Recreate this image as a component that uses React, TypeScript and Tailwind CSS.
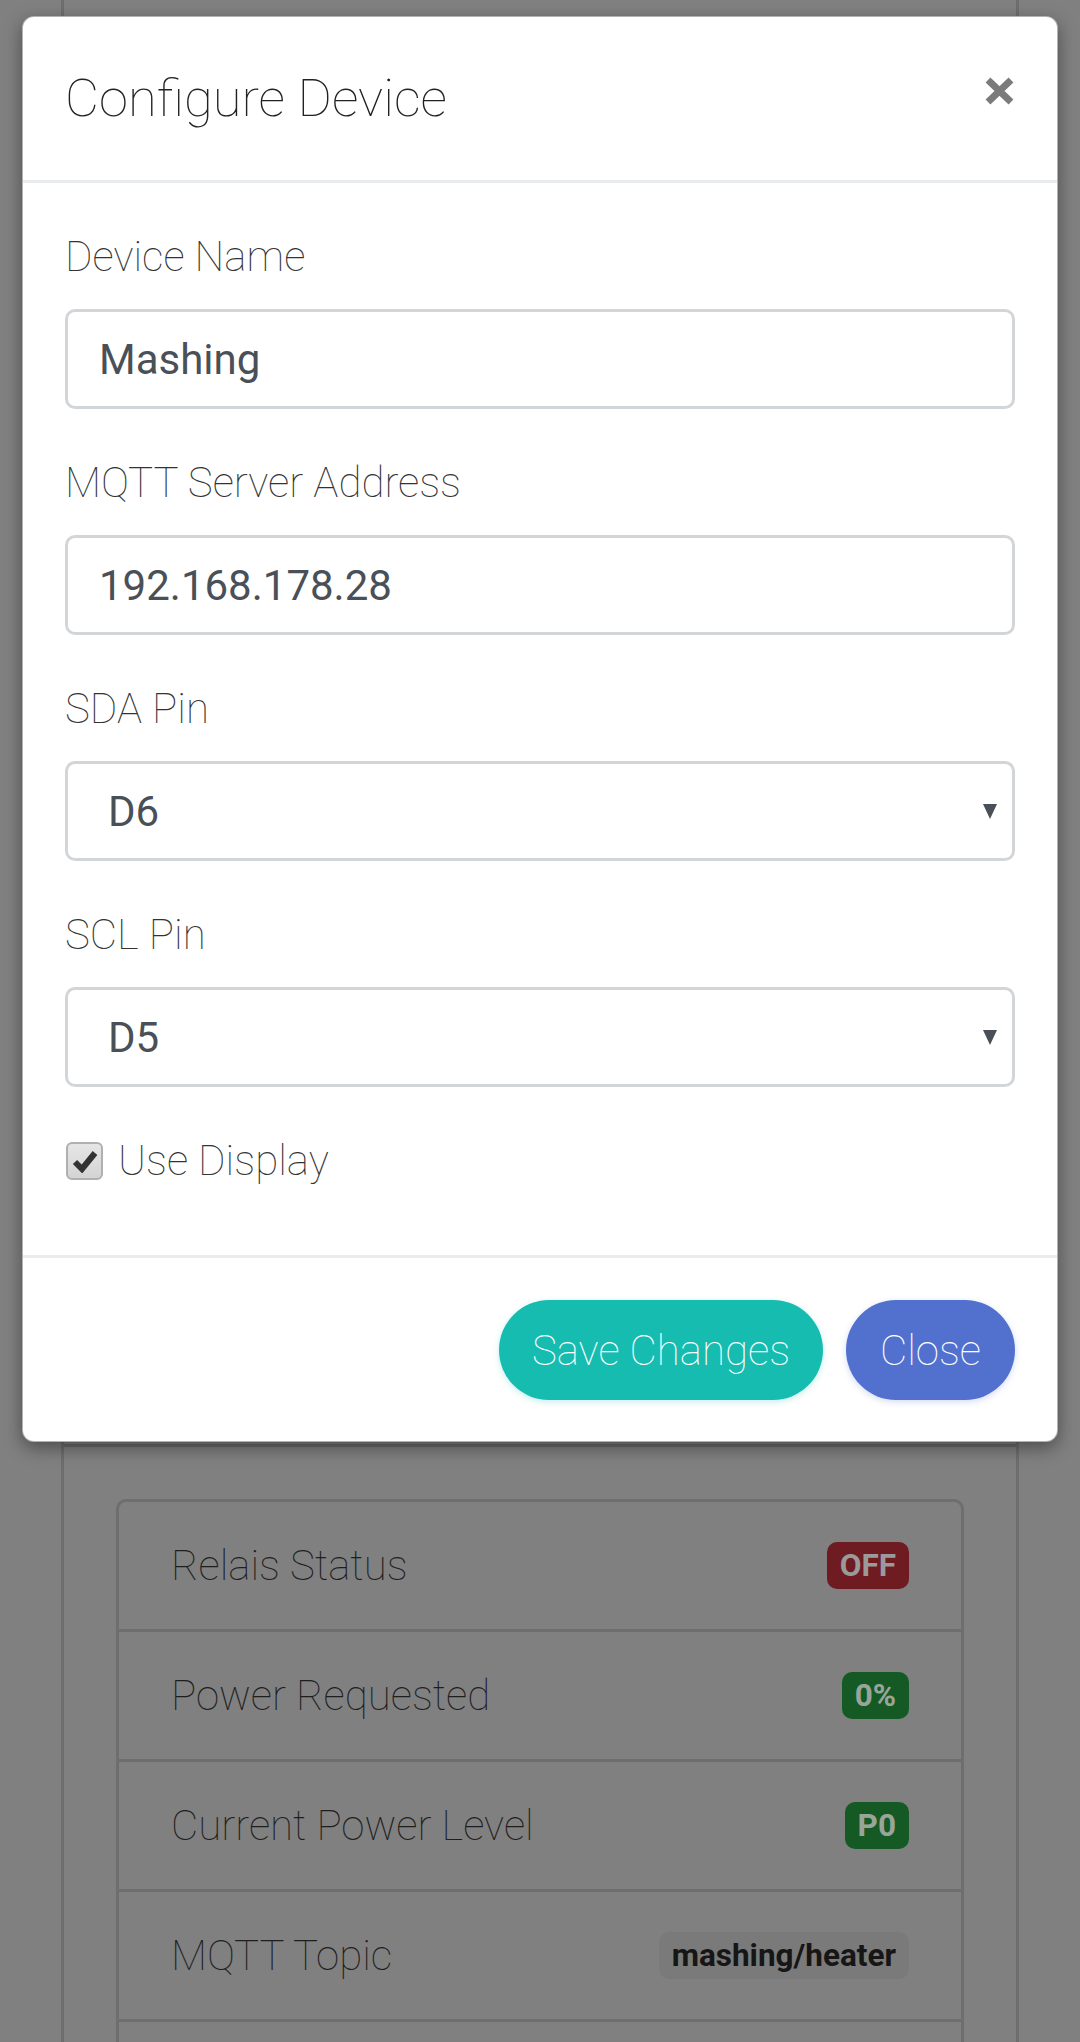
import React from 'react'

interface Field {
  label: string
  value: string
  select?: boolean
}

const fields: Field[] = [
  { label: 'Device Name', value: 'Mashing' },
  { label: 'MQTT Server Address', value: '192.168.178.28' },
  { label: 'SDA Pin', value: 'D6', select: true },
  { label: 'SCL Pin', value: 'D5', select: true },
]

interface StatusRow {
  name: string
  value: string
  badge: string
}

const rows: StatusRow[] = [
  { name: 'Relais Status', value: 'OFF', badge: 'bg-[#6e1b22] text-[#9a9a9a]' },
  { name: 'Power Requested', value: '0%', badge: 'bg-[#155a25] text-[#9aa59a]' },
  { name: 'Current Power Level', value: 'P0', badge: 'bg-[#155a25] text-[#9aa59a]' },
  { name: 'MQTT Topic', value: 'mashing/heater', badge: 'bg-[#7a7a7a] text-[#161616]' },
]

function CloseIcon() {
  return (
    <svg width="31" height="28" viewBox="0 0 31 28" className="mt-[18px] shrink-0">
      <path d="M4 3 L27 25 M27 3 L4 25" stroke="#7b7b7b" strokeWidth="7" strokeLinecap="butt" />
    </svg>
  )
}

function Checkbox() {
  return (
    <div className="w-[37px] h-[38px] rounded-[6px] border-[2px] border-[#b0b0b0] bg-gradient-to-b from-[#e6e6e6] to-[#d4d4d4] flex items-center justify-center shrink-0">
      <svg width="26" height="24" viewBox="0 0 26 24">
        <path d="M3 13 L10 20 L23 4" fill="none" stroke="#333" strokeWidth="6" strokeLinejoin="miter" />
      </svg>
    </div>
  )
}

export default function App() {
  return (
    <div className="relative w-[1080px] h-[2042px] overflow-hidden bg-[#808080] font-[Roboto,sans-serif]">
      {/* Page behind the backdrop */}
      <div className="mx-[61px] border-x-[3px] border-[#6e6e6e] h-full">
        {/* covered by the modal */}
        <div className="h-[1447px] border-b-[3px] border-[#6a6a6a]" />
        <div className="px-[52px] pt-[52px]">
          <div className="rounded-t-[10px] border-[3px] border-[#6e6e6e]">
            {rows.map((row, i) => (
              <div
                key={row.name}
                className={
                  'flex items-center justify-between px-[52px] py-[32px] ' +
                  (i > 0 ? 'border-t-[3px] border-[#6e6e6e]' : '')
                }
              >
                <span className="text-[42px] leading-[63px] font-thin text-[#1e1e1e]">{row.name}</span>
                <span
                  className={
                    'text-[31.5px] font-bold leading-none px-[13px] py-[8px] rounded-[10px] ' + row.badge
                  }
                >
                  {row.value}
                </span>
              </div>
            ))}
            {/* next row, below the fold */}
            <div className="h-[127px] border-t-[3px] border-[#6e6e6e]" />
          </div>
        </div>
      </div>

      {/* Modal */}
      <div className="absolute left-[22px] top-[16px] w-[1036px] bg-white rounded-[12px] border border-black/30 shadow-[0_6px_18px_rgba(0,0,0,0.4)]">
        <div className="flex items-start justify-between px-[42px] py-[42px] border-b-[3px] border-[#e9ecef]">
          <h5 className="text-[52.5px] leading-[79px] font-thin text-[#222]">Configure Device</h5>
          <CloseIcon />
        </div>

        <div className="px-[42px] pt-[42px] pb-[42px]">
          {fields.map((f) => (
            <div key={f.label} className="mb-[42px]">
              <label className="block text-[42px] leading-[63px] font-thin text-[#333] mb-[21px]">
                {f.label}
              </label>
              <div className="h-[100px] rounded-[10px] border-[3px] border-[#d3d6d9] flex items-center justify-between">
                <span className={'text-[42px] text-[#495057] ' + (f.select ? 'pl-[40px]' : 'pl-[31px]')}>
                  {f.value}
                </span>
                {f.select && (
                  <svg width="14" height="15" viewBox="0 0 14 15" className="mr-[15px]">
                    <path d="M0 0 H14 L7 15 Z" fill="#495057" />
                  </svg>
                )}
              </div>
            </div>
          ))}

          <div className="flex items-center gap-[15px] h-[63px] mb-[21px] pl-[1px]">
            <Checkbox />
            <span className="text-[42px] leading-[63px] font-thin text-[#333]">Use Display</span>
          </div>
        </div>

        <div className="flex justify-end gap-[23px] px-[42px] pt-[42px] pb-[41px] border-t-[3px] border-[#e9ecef]">
          <button className="w-[324px] h-[100px] rounded-full bg-[#16bcaf] text-white text-[42px] font-thin shadow-[0_2px_6px_rgba(22,188,175,0.25)]">
            Save Changes
          </button>
          <button className="w-[169px] h-[100px] rounded-full bg-[#5271cf] text-white text-[42px] font-thin shadow-[0_2px_6px_rgba(82,113,207,0.25)]">
            Close
          </button>
        </div>
      </div>
    </div>
  )
}
